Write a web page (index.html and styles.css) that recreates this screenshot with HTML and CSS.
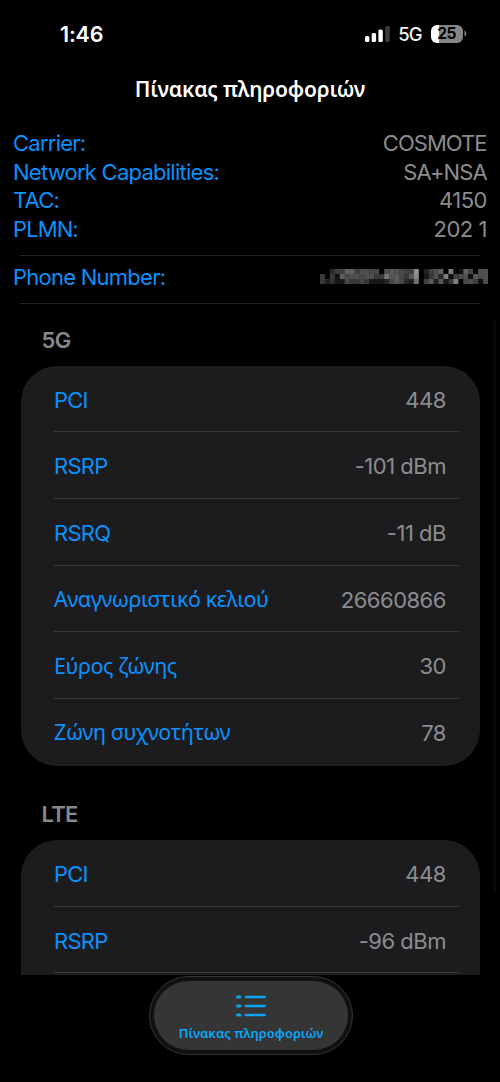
FILE: index.html
```html
<!DOCTYPE html>
<html lang="el">
<head>
<meta charset="utf-8">
<title>Πίνακας πληροφοριών</title>
<link rel="stylesheet" href="styles.css">
</head>
<body>
<div class="screen">
  <header class="status">
    <span class="time">1:46</span>
    <div class="indicators">
      <svg class="signal" width="26" height="16" viewBox="0 0 26 16">
        <rect x="0" y="10" width="4.4" height="6" rx="1.5" fill="#fff"/>
        <rect x="6.7" y="7" width="4.4" height="9" rx="1.5" fill="#fff"/>
        <rect x="13.4" y="3.6" width="4.4" height="12.4" rx="1.5" fill="#fff"/>
        <rect x="20.2" y="0" width="4.6" height="16" rx="1.5" fill="#3b3b3d"/>
      </svg>
      <span class="network">5G</span>
      <span class="battery"><span class="battery-text">25</span></span>
      <svg class="cap" width="3" height="7" viewBox="0 0 3 7"><path d="M0.5 0.5C3 1.5 3 5.5 0.5 6.5Z" fill="#858585"/></svg>
    </div>
  </header>
  <h1 class="title">Πίνακας πληροφοριών</h1>
  <section class="summary">
    <div class="line"><span class="label">Carrier:</span><span class="value caps">COSMOTE</span></div>
    <div class="line"><span class="label">Network Capabilities:</span><span class="value caps">SA+NSA</span></div>
    <div class="line"><span class="label">TAC:</span><span class="value">4150</span></div>
    <div class="line"><span class="label tight">PLMN:</span><span class="value">202 1</span></div>
  </section>
  <section class="phone">
    <span class="label">Phone Number:</span>
    <svg class="mosaic" width="168" height="15" viewBox="0 0 34 3" preserveAspectRatio="none"></svg>
  </section>
  <main class="list">
    <h2 class="group">5G</h2>
    <div class="card">
      <div class="row"><span class="label">PCI</span><span class="value">448</span></div>
      <div class="row"><span class="label">RSRP</span><span class="value">-101 dBm</span></div>
      <div class="row"><span class="label">RSRQ</span><span class="value">-11 dB</span></div>
      <div class="row"><span class="label greek">Αναγνωριστικό κελιού</span><span class="value">26660866</span></div>
      <div class="row"><span class="label greek">Εύρος ζώνης</span><span class="value">30</span></div>
      <div class="row"><span class="label greek">Ζώνη συχνοτήτων</span><span class="value">78</span></div>
    </div>
    <h2 class="group lte">LTE</h2>
    <div class="card">
      <div class="row"><span class="label">PCI</span><span class="value">448</span></div>
      <div class="row"><span class="label">RSRP</span><span class="value">-96 dBm</span></div>
      <div class="row"></div>
    </div>
  </main>
  <div class="scrollbar"></div>
  <nav class="tabbar">
    <div class="tab">
      <svg width="30" height="22" viewBox="0 0 30 22" fill="none" stroke="#09a6f8" stroke-linecap="round">
        <path d="M1.7 2H3.8M1.7 11H3.8M1.7 20H3.8" stroke-width="3.2"/>
        <path d="M10 2H28.5M10 11H28.5M10 20H28.5" stroke-width="2.6"/>
      </svg>
      <span class="tab-label">Πίνακας πληροφοριών</span>
    </div>
  </nav>
</div>
<script src="mosaic.js"></script>
</body>
</html>
```
FILE: styles.css
```css
* { box-sizing: border-box; }
body { margin: 0; background: #000; font-family: Inter, "Noto Sans", sans-serif; }
.screen { position: relative; width: 500px; height: 1082px; background: #000; overflow: hidden; white-space: nowrap; }
.status { height: 67px; padding: 0 33.5px 0 60px; display: flex; align-items: center; justify-content: space-between; }
.time { color: #fff; font-size: 21.5px; font-weight: 600; letter-spacing: -0.2px; }
.indicators { display: flex; align-items: center; }
.network { color: #f2f2f2; font-size: 18.5px; font-weight: 500; margin: 0 9px 0 7.5px; letter-spacing: -1px; line-height: 20px; }
.battery { width: 32px; height: 18px; border-radius: 6px; background: linear-gradient(90deg, #fff 0 8px, #858585 8px); display: flex; align-items: center; justify-content: center; }
.battery-text { color: #000; font-size: 15.5px; font-weight: 700; line-height: 18px; letter-spacing: -0.6px; }
.cap { margin-left: 1px; }
.title { margin: 0; height: 61px; padding-top: 9px; text-align: center; font-family: "Noto Sans", sans-serif; font-size: 21px; line-height: 26px; font-weight: 600; letter-spacing: -0.17px; color: #fff; }
.label { color: #0a91fb; letter-spacing: -0.75px; }
.label.tight { letter-spacing: -0.9px; }
.label.greek { font-family: "Noto Sans", sans-serif; font-size: 21.5px; letter-spacing: -0.42px; margin-top: -2px; }
.value { color: #8c8c90; letter-spacing: -0.5px; margin-right: 0.1px; }
.value.caps { letter-spacing: -0.95px; margin-right: 0.4px; }
.summary { padding: 1px 13px 0; height: 127px; font-size: 22px; }
.line { height: 28.6px; display: flex; align-items: center; justify-content: space-between; line-height: 28px; }
.phone { height: 48px; padding: 0 12px 4px 13px; display: flex; align-items: center; justify-content: space-between; font-size: 22px; background: linear-gradient(#202022, #202022) 19px 0 / 461px 1px no-repeat; }
.mosaic { margin-top: -1px; }
.list { height: 672px; padding: 0 20.5px; overflow: hidden; background: linear-gradient(#202022, #202022) 19px 0 / 461px 1px no-repeat; }
.group { margin: 0; height: 63px; padding: 24px 0 0 21px; font-size: 22px; line-height: 27px; font-weight: 600; color: #88888c; letter-spacing: -0.7px; }
.group.lte { height: 74.5px; padding-top: 35px; }
.card { background: #1c1c1e; border-radius: 36px; padding: 0 33.5px; overflow: hidden; }
.row { height: 66.65px; display: flex; align-items: center; justify-content: space-between; font-size: 22px; position: relative; padding-top: 0.6px; }
.row + .row::before { content: ""; position: absolute; left: 0; right: -13px; top: -1.3px; height: 1px; background: #3a3a3d; }
.scrollbar { position: absolute; left: 493px; top: 318px; width: 3px; height: 576px; border-radius: 2px; background: #080808; }
.tabbar { position: absolute; left: 149px; top: 976px; width: 204px; height: 79px; border-radius: 40px; border: 1px solid #343436; background: #111112; padding: 4px; }
.tab { height: 69px; border-radius: 35px; background: #353535; display: flex; flex-direction: column; align-items: center; padding-top: 14px; }
.tab svg { display: block; }
.tab-label { margin-top: 8px; color: #09a6f8; font-family: "Noto Sans", sans-serif; font-size: 13px; line-height: 16px; font-weight: 600; }
```
FILE: mosaic.js
```js
// Grey levels of the redacted phone number, one hex pair per 5px block.
const rows = [
  "00002a404060604050504848005058504840409000204050600080001060480050",
  "38003810604850504850503838785858483858880018385028801040485010584c",
  "3820301818483838483818181828485848282070004058205818388000485040104c"
];
const svg = document.querySelector(".mosaic");
rows.forEach((row, y) => {
  for (let x = 0; x < 34; x++) {
    const level = row.slice(x * 2, x * 2 + 2) || "50";
    const block = document.createElementNS("http://www.w3.org/2000/svg", "rect");
    block.setAttribute("x", x);
    block.setAttribute("y", y);
    block.setAttribute("width", 1.05);
    block.setAttribute("height", 1);
    block.setAttribute("fill", "#" + level + level + level);
    svg.appendChild(block);
  }
});
```
